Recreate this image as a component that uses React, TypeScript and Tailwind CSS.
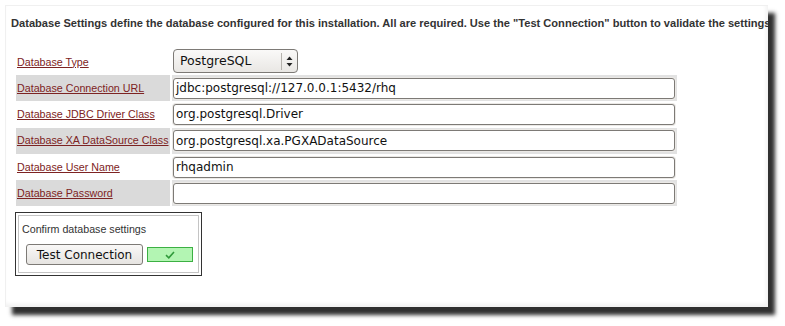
import React from "react";

const rows: { label: string; value: string; gray: boolean }[] = [
  { label: "Database Connection URL", value: "jdbc:postgresql://127.0.0.1:5432/rhq", gray: true },
  { label: "Database JDBC Driver Class", value: "org.postgresql.Driver", gray: false },
  { label: "Database XA DataSource Class", value: "org.postgresql.xa.PGXADataSource", gray: true },
  { label: "Database User Name", value: "rhqadmin", gray: false },
  { label: "Database Password", value: "", gray: true },
];

function Label({ text }: { text: string }) {
  return (
    <span className="underline text-[#7d2323] text-[10.7px] leading-none [font-family:'Liberation_Sans',Arial,sans-serif] whitespace-nowrap">
      {text}
    </span>
  );
}

export default function App() {
  return (
    <div className="w-[785px] h-[326px] bg-white overflow-hidden pt-[5px] pl-[5px]">
      <div className="w-[763px] h-[302px] bg-white overflow-hidden shadow-[7px_8px_4px_rgba(25,25,25,0.9),inset_-2px_-3px_4px_rgba(0,0,0,0.06)] border-l border-t border-[#f0f0f0]">
        <div className="pt-[10px] pl-[5px] whitespace-nowrap text-[11.1px] leading-[14px] font-bold text-[#333] [font-family:'Liberation_Sans',Arial,sans-serif]">
          Database Settings define the database configured for this installation. All are required. Use the "Test Connection" button to validate the settings.
        </div>

        <div className="mt-[19px] ml-[10px] flex flex-col">
          {/* Row 1: select */}
          <div className="flex h-[26px]">
            <div className="w-[154px] flex items-center pl-[1px]">
              <Label text="Database Type" />
            </div>
            <div className="ml-[2px] pl-[1px] pt-[0px]">
              <div className="w-[125px] h-[24px] rounded-[4px] border border-[#7d7a76] bg-gradient-to-b from-[#faf9f8] to-[#e9e7e4] flex items-center [font-family:'DejaVu_Sans',sans-serif] text-[12.5px] text-[#111]">
                <span className="pl-[6px] flex-1">PostgreSQL</span>
                <span className="w-px h-[17px] bg-[#b5b2ad]" />
                <span className="w-[15px] flex justify-center">
                  <svg width="7" height="11" viewBox="0 0 7 11">
                    <path d="M3.5 0.5 L6.5 4 L0.5 4 Z" fill="#222" />
                    <path d="M0.5 7 L6.5 7 L3.5 10.5 Z" fill="#222" />
                  </svg>
                </span>
              </div>
            </div>
          </div>

          {rows.map((r) => (
            <div key={r.label} className="flex h-[26.3px]">
              <div className={`w-[154px] flex items-center pl-[1px] ${r.gray ? "bg-[#dadada]" : ""}`}>
                <Label text={r.label} />
              </div>
              <div className={`ml-[2px] w-[505px] flex items-center pl-[1px] ${r.gray ? "bg-[#e2e2e2]" : ""}`}>
                <div className="w-[502px] h-[21px] rounded-[3px] border border-[#7d7a76] bg-white shadow-[0_0_0_1px_#ebe9e6] flex items-center pl-[2px] [font-family:'DejaVu_Sans',sans-serif] text-[12px] text-[#111] whitespace-nowrap">
                  {r.value}
                </div>
              </div>
            </div>
          ))}
        </div>

        <div className="mt-[6px] ml-[9px] w-[187px] h-[64px] border border-[#333] p-[2px]">
          <div className="w-full h-full border border-[#c4c4c4] pl-[3px]">
            <div className="pt-[6px] text-[10.7px] leading-[14px] text-[#333] [font-family:'Liberation_Sans',Arial,sans-serif]">
              Confirm database settings
            </div>
            <div className="mt-[8px] ml-[4px] flex items-center">
              <div className="w-[117px] h-[21px] rounded-[3px] border border-[#7d7a76] bg-gradient-to-b from-[#f9f8f7] to-[#e6e4e1] flex items-center justify-center [font-family:'DejaVu_Sans',sans-serif] text-[12px] text-[#111]">
                Test Connection
              </div>
              <div className="ml-[4px] w-[46px] h-[15px] border border-[#3cb043] bg-[#b3f5b3] flex items-center justify-center">
                <svg width="10" height="8" viewBox="0 0 10 8">
                  <path d="M1 4.2 L3.8 6.8 L9 1" stroke="#2f9a3a" strokeWidth="1.6" fill="none" />
                </svg>
              </div>
            </div>
          </div>
        </div>
      </div>
    </div>
  );
}
